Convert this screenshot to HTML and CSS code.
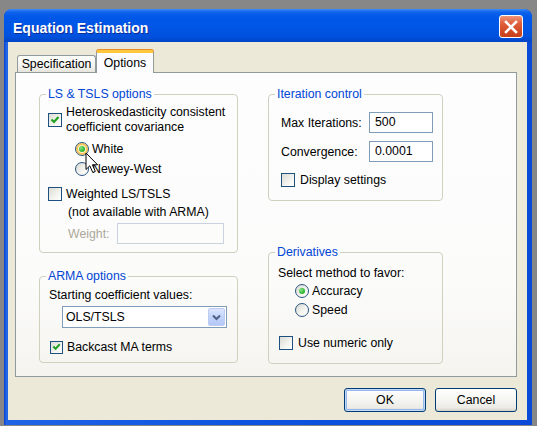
FILE: index.html
```html
<!DOCTYPE html>
<html lang="en">
<head>
  <meta charset="UTF-8">
  <title>Equation Estimation</title>
  <link rel="stylesheet" href="styles.css">
</head>
<body>
  <div class="window">
    <div class="titlebar">
      <span class="title">Equation Estimation</span>
      <span class="close">
        <svg width="14" height="14" viewBox="0 0 14 14"><path d="M2 2 L12 12 M12 2 L2 12" stroke="#fff" stroke-width="2.6" stroke-linecap="square"/></svg>
      </span>
    </div>

    <div class="client">
      <div class="tabs">
        <div class="tab">Specification</div>
        <div class="tab active">Options</div>
      </div>

      <div class="page">
        <div class="col col-left">
          <fieldset class="group ls">
            <legend>LS &amp; TSLS options</legend>
            <div class="row multi">
              <span class="box checked"><svg width="12" height="12" viewBox="0 0 12 12"><path d="M2.5 5.5 L5 8 L9.5 3" fill="none" stroke="#21a121" stroke-width="2.2"/></svg></span>
              <span class="lbl">Heteroskedasticity consistent<br>coefficient covariance</span>
            </div>
            <div class="row radio-row first">
              <span class="radio on hover"></span>
              <span class="lbl">White</span>
            </div>
            <div class="row radio-row">
              <span class="radio"></span>
              <span class="lbl">Newey-West</span>
              <svg class="cursor" width="14" height="22" viewBox="0 0 14 22"><path d="M1 1 L1 17.5 L4.8 13.8 L7.8 20.5 L10.3 19.4 L7.4 12.8 L12.6 12.8 Z" fill="#fff" stroke="#000" stroke-width="1" stroke-linejoin="round"/></svg>
            </div>
            <div class="row weighted">
              <span class="box"></span>
              <span class="lbl">Weighted LS/TSLS</span>
            </div>
            <div class="row note">(not available with ARMA)</div>
            <div class="row weight">
              <span class="dim">Weight:</span>
              <span class="input disabled"></span>
            </div>
          </fieldset>

          <fieldset class="group arma">
            <legend>ARMA options</legend>
            <div class="row">Starting coefficient values:</div>
            <div class="select">
              <span class="select-text">OLS/TSLS</span>
              <span class="select-btn"><svg width="9" height="7" viewBox="0 0 9 7"><path d="M1 1.5 L4.5 5 L8 1.5" fill="none" stroke="#4d6185" stroke-width="2"/></svg></span>
            </div>
            <div class="row backcast">
              <span class="box checked small"><svg width="12" height="12" viewBox="0 0 12 12"><path d="M2.5 5.5 L5 8 L9.5 3" fill="none" stroke="#21a121" stroke-width="2.2"/></svg></span>
              <span class="lbl">Backcast MA terms</span>
            </div>
          </fieldset>
        </div>

        <div class="col col-right">
          <fieldset class="group iter">
            <legend>Iteration control</legend>
            <div class="field">
              <span class="field-lbl">Max Iterations:</span>
              <span class="input num">500</span>
            </div>
            <div class="field conv">
              <span class="field-lbl">Convergence:</span>
              <span class="input num">0.0001</span>
            </div>
            <div class="row display">
              <span class="box"></span>
              <span class="lbl">Display settings</span>
            </div>
          </fieldset>

          <fieldset class="group deriv">
            <legend>Derivatives</legend>
            <div class="row">Select method to favor:</div>
            <div class="row deriv-radio first">
              <span class="radio on"></span>
              <span class="lbl">Accuracy</span>
            </div>
            <div class="row deriv-radio">
              <span class="radio"></span>
              <span class="lbl">Speed</span>
            </div>
            <div class="row numeric">
              <span class="box"></span>
              <span class="lbl">Use numeric only</span>
            </div>
          </fieldset>
        </div>
      </div>

      <div class="buttons">
        <button class="btn default">OK</button>
        <button class="btn">Cancel</button>
      </div>
    </div>
  </div>
</body>
</html>
```

FILE: styles.css
```css
* {
  box-sizing: border-box;
}
body {
  margin: 0;
  width: 537px;
  height: 426px;
  overflow: hidden;
  background: #878787;
  font-family: "Liberation Sans", Arial, sans-serif;
  font-size: 12.3px;
  color: #000;
}
.window {
  margin: 9px 0 0 4px;
  width: 528px;
  height: 416px;
  padding-bottom: 5px;
  border-radius: 8px 8px 0 0;
  background: linear-gradient(to right, #0b3fc4 0, #1f63e6 2px, #0a52df 50%, #0a4ad6 100%);
  display: flex;
  flex-direction: column;
}
.titlebar {
  flex: none;
  height: 33px;
  padding: 11px 9px 0 9px;
  display: flex;
  justify-content: space-between;
  align-items: flex-start;
  border-radius: 8px 8px 0 0;
  background: linear-gradient(to bottom, #3d8cf6 0, #0f63ec 3px, #0058e8 8px, #0055e5 60%, #0050dc 85%, #0044c4 100%);
}
.title {
  font-weight: bold;
  font-size: 14px;
  line-height: 16px;
  color: #fff;
  text-shadow: 1px 1px 0 #0c2c99;
}
.close {
  width: 24px;
  height: 23px;
  margin-top: -5px;
  border: 1px solid #fff;
  border-radius: 3px;
  background: linear-gradient(to bottom, #f0957a 0, #e0603c 35%, #d04a24 75%, #c5421c 100%);
  display: flex;
  align-items: center;
  justify-content: center;
}
.client {
  flex: 1;
  margin: 0 5px 0 4px;
  padding: 8px 10px 8px 7px;
  background: #ece9d8;
  display: flex;
  flex-direction: column;
}
.tabs {
  display: flex;
  align-items: flex-end;
  height: 22px;
  padding-left: 2px;
}
.tab {
  width: 79px;
  height: 17px;
  line-height: 16px;
  text-align: center;
  border: 1px solid #919b9c;
  border-bottom: none;
  border-radius: 3px 3px 0 0;
  background: linear-gradient(to bottom, #fff 0, #f3f3ef 60%, #e6e5dd 100%);
}
.tab.active {
  width: 58px;
  height: 23px;
  margin-bottom: -1px;
  padding-top: 2px;
  position: relative;
  z-index: 1;
  border-top: 3px solid #ffc83c;
  box-shadow: 0 -1px 0 #e68b2c;
  background: #fcfcfe;
}
.page {
  flex: none;
  height: 305px;
  border: 1px solid #919b9c;
  background: linear-gradient(to bottom, #fdfdfe 0, #fbfbfa 70%, #f5f4ef 100%);
  padding: 14px 0 0 23px;
  display: flex;
  gap: 30px;
}
.col {
  display: flex;
  flex-direction: column;
}
.col-left {
  width: 199px;
}
.col-right {
  width: 175px;
}
.group {
  margin: 0;
  min-width: 0;
  border: 1px solid #d0d0bf;
  border-radius: 4px;
  padding: 0;
}
.group legend {
  padding: 0 2px;
  line-height: 14px;
  color: #0046d5;
}
.row {
  display: flex;
  align-items: center;
  height: 16px;
  line-height: 16px;
  white-space: nowrap;
  position: relative;
}
.lbl {
  margin-left: 4px;
}
.box {
  flex: none;
  width: 14px;
  height: 14px;
  border: 1px solid #1c5180;
  background: linear-gradient(135deg, #dcdcd5 0, #f4f4f0 60%, #fff 100%);
  display: flex;
  align-items: center;
  justify-content: center;
}
.box.small {
  width: 13px;
  height: 13px;
}
.radio {
  flex: none;
  width: 14px;
  height: 14px;
  border: 1px solid #2a5582;
  border-radius: 50%;
  background: linear-gradient(135deg, #d8d8d2 0, #f3f3ef 55%, #fff 100%);
  position: relative;
}
.radio.on::after {
  content: "";
  position: absolute;
  left: 3px;
  top: 3px;
  width: 6px;
  height: 6px;
  border-radius: 50%;
  background: radial-gradient(circle at 35% 35%, #8ce58c 0, #3cbf3c 50%, #1d9a1d 100%);
}
.radio.hover {
  box-shadow: inset 0 0 0 2px #f9c55a;
  background: #fdf3c8;
}
.input {
  display: block;
  height: 21px;
  border: 1px solid #7f9db9;
  background: #fff;
}
.input.disabled {
  border-color: #c9d3df;
  background: #fcfcfb;
}
.num {
  width: 64px;
  padding-left: 5px;
  line-height: 19px;
}
.dim {
  color: #aca899;
}

/* LS & TSLS */
.ls {
  padding: 4px 0 8px 8px;
}
.ls legend {
  margin-left: -2px;
}
.multi {
  height: 30px;
  line-height: 15px;
}
.radio-row {
  height: 20px;
  padding-left: 27px;
}
.radio-row.first {
  margin-top: 4px;
}
.radio-row .lbl {
  margin-left: 3px;
}
.cursor {
  position: absolute;
  left: 37px;
  top: -7px;
}
.weighted {
  margin-top: 7px;
}
.note {
  margin-top: 2px;
  padding-left: 20px;
}
.weight {
  height: 21px;
  margin-top: 3px;
  padding-left: 20px;
}
.weight .input {
  width: 107px;
  margin-left: 8px;
}

/* ARMA */
.arma {
  margin-top: 16px;
  padding: 4px 0 7px 9px;
}
.arma legend {
  margin-left: -3px;
}
.select {
  display: flex;
  align-items: center;
  width: 165px;
  height: 22px;
  margin: 3px 0 0 13px;
  border: 1px solid #7f9db9;
  background: #fff;
  padding: 1px;
}
.select-text {
  flex: 1;
  padding-left: 2px;
}
.select-btn {
  width: 17px;
  height: 18px;
  border: 1px solid #bcccf3;
  border-radius: 2px;
  background: linear-gradient(to bottom, #dbe5fd 0, #c3d3fb 50%, #b4c8f6 100%);
  display: flex;
  align-items: center;
  justify-content: center;
}
.backcast {
  margin-top: 11px;
  padding-left: 1px;
}
.backcast .lbl {
  margin-left: 4px;
}

/* Iteration control */
.iter {
  padding: 11px 0 12px 12px;
}
.iter legend {
  margin-left: -6px;
}
.field {
  display: flex;
  align-items: center;
  height: 21px;
}
.field-lbl {
  width: 88px;
}
.conv {
  margin-top: 8px;
}
.display {
  margin-top: 10px;
}
.display .lbl {
  margin-left: 5px;
}

/* Derivatives */
.deriv {
  margin-top: 44px;
  padding: 6px 0 12px 9px;
}
.deriv legend {
  margin-left: -3px;
}
.deriv-radio {
  padding-left: 17px;
}
.deriv-radio.first {
  margin-top: 2px;
}
.deriv-radio + .deriv-radio {
  margin-top: 3px;
}
.deriv-radio .lbl {
  margin-left: 3px;
}
.numeric {
  margin-top: 17px;
  padding-left: 1px;
}
.numeric .lbl {
  margin-left: 5px;
}

/* Buttons */
.buttons {
  margin-top: 11px;
  display: flex;
  justify-content: flex-end;
  gap: 9px;
}
.btn {
  width: 82px;
  height: 24px;
  font-family: "Liberation Sans", Arial, sans-serif;
  font-size: 12.3px;
  color: #000;
  border: 1px solid #003c74;
  border-radius: 3px;
  background: linear-gradient(to bottom, #fff 0, #f7f7f4 40%, #ecebe6 85%, #d6d0c5 100%);
  padding: 0;
}
.btn.default {
  box-shadow: inset 0 0 0 1px #c4d8f7, inset 0 0 0 2px #97b8ee;
}
```
